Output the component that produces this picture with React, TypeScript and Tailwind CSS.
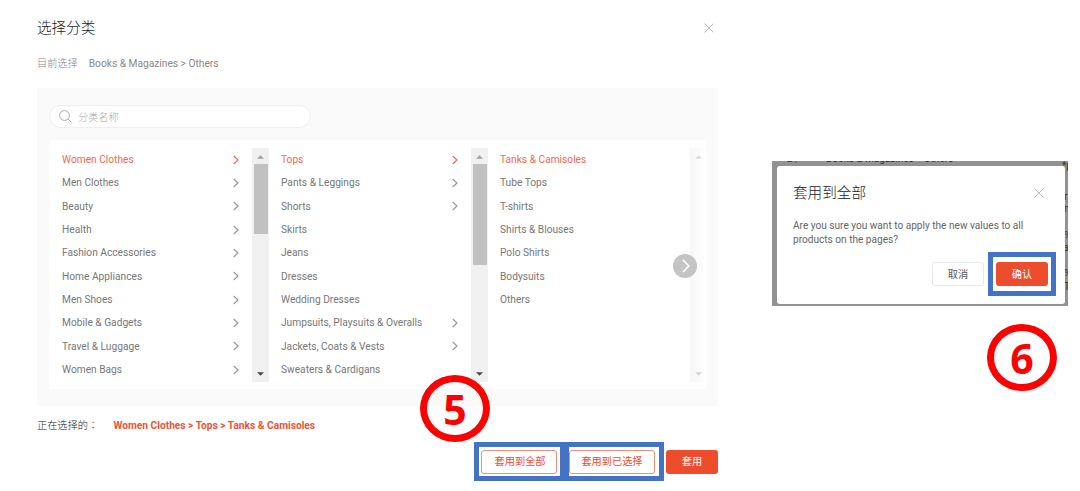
import type { ReactNode } from 'react';

interface ICategory {
  name: string;
  hasChild?: boolean;
}

const mainCategories: ICategory[] = [
  { name: 'Women Clothes', hasChild: true },
  { name: 'Men Clothes', hasChild: true },
  { name: 'Beauty', hasChild: true },
  { name: 'Health', hasChild: true },
  { name: 'Fashion Accessories', hasChild: true },
  { name: 'Home Appliances', hasChild: true },
  { name: 'Men Shoes', hasChild: true },
  { name: 'Mobile & Gadgets', hasChild: true },
  { name: 'Travel & Luggage', hasChild: true },
  { name: 'Women Bags', hasChild: true },
];

const subCategories: ICategory[] = [
  { name: 'Tops', hasChild: true },
  { name: 'Pants & Leggings', hasChild: true },
  { name: 'Shorts', hasChild: true },
  { name: 'Skirts' },
  { name: 'Jeans' },
  { name: 'Dresses' },
  { name: 'Wedding Dresses' },
  { name: 'Jumpsuits, Playsuits & Overalls', hasChild: true },
  { name: 'Jackets, Coats & Vests', hasChild: true },
  { name: 'Sweaters & Cardigans' },
];

const leafCategories: ICategory[] = [
  { name: 'Tanks & Camisoles' },
  { name: 'Tube Tops' },
  { name: 'T-shirts' },
  { name: 'Shirts & Blouses' },
  { name: 'Polo Shirts' },
  { name: 'Bodysuits' },
  { name: 'Others' },
];

const CloseIcon = ({ className }: { className: string }) => (
  <svg viewBox="0 0 10 10" fill="none" stroke="currentColor" className={className}>
    <path d="M0.5 0.5l9 9M9.5 0.5l-9 9" />
  </svg>
);

const Chevron = () => (
  <svg
    viewBox="0 0 6 10"
    fill="none"
    stroke="currentColor"
    strokeWidth="1.2"
    className="h-2.5 w-1.5"
  >
    <path d="M0.7 1l4.3 4-4.3 4" />
  </svg>
);

const Scrollbar = ({
  thumb,
  faded = false,
}: {
  thumb?: string;
  faded?: boolean;
}) => (
  <div
    className={`flex h-[234px] w-[17px] shrink-0 flex-col items-center justify-between ${
      faded ? 'bg-linear-to-r from-[#f6f6f6] to-white' : 'bg-[#f0f0f0]'
    }`}
  >
    <div className="flex w-full flex-col items-center">
      <svg
        viewBox="0 0 8 4"
        className={`mt-[7px] mb-[5px] h-1 w-[7px] ${faded ? 'text-[#dddddd]' : 'text-[#a0a0a0]'}`}
      >
        <path d="M0 4l4-4 4 4z" fill="currentColor" />
      </svg>
      {thumb && <div className={`w-3.5 bg-[#c1c1c1] ${thumb}`} />}
    </div>
    <svg
      viewBox="0 0 8 4"
      className={`mb-[6px] h-1 w-[7px] ${faded ? 'text-[#d5d5d5]' : 'text-[#484848]'}`}
    >
      <path d="M0 0h8l-4 4z" fill="currentColor" />
    </svg>
  </div>
);

const CategoryColumn = ({
  items,
  children,
}: {
  items: ICategory[];
  children: ReactNode;
}) => (
  <div className="flex w-[219px] shrink-0">
    <ul className="flex-1 pr-[13px] pl-3">
      {items.map((item, index) => (
        <li
          key={item.name}
          className={`flex h-[23.35px] items-center justify-between whitespace-nowrap ${
            index === 0 ? 'text-[#f4694c]' : 'text-[#777777]'
          }`}
        >
          <span>{item.name}</span>
          {item.hasChild && (
            <span className={index === 0 ? '' : 'text-[#999999]'}>
              <Chevron />
            </span>
          )}
        </li>
      ))}
    </ul>
    {children}
  </div>
);

const StepBadge = ({
  step,
  className,
}: {
  step: number;
  className: string;
}) => (
  <div
    className={`absolute flex h-[67px] w-[70px] items-center justify-center rounded-[50%] border-[7px] border-[#ff0000] pt-0.5 font-['Open_Sans'] text-[41px] leading-none font-bold text-[#ff0000] ${className}`}
  >
    <span>{step}</span>
  </div>
);

const CategoryPicker = () => (
  <section className="w-[681px] pt-[17px]">
    <div className="flex h-[22px] items-center justify-between">
      <h1 className="pt-0.5 text-[14.6px] font-light text-[#222222]">选择分类</h1>
      <CloseIcon className="mr-1 size-2.5 text-[#b8b8b8]" />
    </div>
    <div className="mt-[14px] flex h-5 items-center gap-[10px] pt-px text-[#888888]">
      <span className="font-light">目前选择</span>
      <span className="pl-px">Books &amp; Magazines &gt; Others</span>
    </div>

    <div className="mt-[15px] h-[318px] bg-[#fafafa] px-3 pt-[17px]">
      <div className="flex h-[23px] w-[262px] items-center gap-[6px] rounded-full border border-[#eeeeee] bg-white pl-[9px] text-[#aaaaaa]">
        <svg
          viewBox="0 0 13 13"
          fill="none"
          stroke="currentColor"
          className="size-[13px]"
        >
          <circle cx="5.5" cy="5.5" r="4.9" />
          <path d="M9.1 9.1l3.4 3.4" />
        </svg>
        <span className="pt-0.5 font-light">分类名称</span>
      </div>
      <div className="relative mt-3 flex h-[249px] overflow-hidden bg-white pt-2 pl-px">
        <CategoryColumn items={mainCategories}>
          <Scrollbar thumb="h-[70px]" />
        </CategoryColumn>
        <CategoryColumn items={subCategories}>
          <Scrollbar thumb="h-[101px]" />
        </CategoryColumn>
        <CategoryColumn items={leafCategories}>
          <Scrollbar faded />
        </CategoryColumn>
        <div className="absolute top-[114px] right-[9px] flex size-6 items-center justify-center rounded-full bg-[#c4c4c4]">
          <svg
            viewBox="0 0 8 14"
            fill="none"
            stroke="white"
            strokeWidth="1.6"
            className="ml-0.5 h-3.5 w-2"
          >
            <path d="M0.8 0.8l6 6.2-6 6.2" />
          </svg>
        </div>
      </div>
    </div>

    <div className="mt-[9px] flex h-5 items-center pt-px">
      <span className="w-[76.5px] font-light text-[#222222]">
        正在选择的<span className="font-['Noto_Sans_CJK_TC']" lang="zh-TW">：</span>
      </span>
      <span className="font-bold text-[#f05335]">
        Women Clothes &gt; Tops &gt; Tanks &amp; Camisoles
      </span>
    </div>
    <div className="mt-[7px] flex items-center justify-end">
      <div className="flex h-[39px] w-[91px] items-center border-5 border-[#4472c4] pl-0.5">
        <button className="h-6 w-[76px] rounded-[3px] border border-[#f28b76] pt-px pl-0.5 text-[#ee4d2d]">
          套用到全部
        </button>
      </div>
      <div className="-ml-px flex h-[39px] w-[100px] items-center border-5 border-[#4472c4]">
        <button className="h-6 w-[86px] rounded-[3px] border border-[#f28b76] pt-px text-[#ee4d2d]">
          套用到已选择
        </button>
      </div>
      <button className="ml-0.5 h-6 w-[52px] rounded-[3px] bg-[#ee4d2d] pt-px text-white">
        套用
      </button>
    </div>
  </section>
);

const ConfirmDialog = () => (
  <section className="relative mt-[161px] ml-[54px] h-[145px] w-[296px] overflow-hidden bg-[#929292] pt-[5px] pl-[5px] text-[10px] leading-none text-[#333333]">
    {/* page behind the dialog, only its edges show */}
    <span className="absolute -top-[7px] left-[15px]">2 /</span>
    <span className="absolute -top-[7px] left-[54px] whitespace-nowrap">
      Books &amp; Magazines &gt; Others
    </span>
    <span className="absolute top-0 left-[290px]">*p</span>
    <span className="absolute top-[31px] left-[292px]">r</span>
    <span className="absolute top-[43px] left-[292px]">m</span>
    <span className="absolute top-[70px] left-[292px]">%</span>
    <span className="absolute top-[82px] left-[291px]">a</span>
    <span className="absolute top-[108px] left-[292px]">%</span>
    <span className="absolute top-[121px] left-[292px]">T</span>

    <div className="relative h-[138px] w-[288px] rounded-[3px] bg-white px-4 pt-[16px]">
      <div className="flex h-[22px] items-center justify-between">
        <h2 className="text-[14.6px] font-light text-[#222222]">套用到全部</h2>
        <CloseIcon className="mr-[5px] size-2.5 text-[#bbbbbb]" />
      </div>
      <p className="mt-[15px] w-[240px] text-[10.1px] leading-[13.5px] text-[#666666]">
        Are you sure you want to apply the new values to all products on the
        pages?
      </p>
      <div className="mt-[6px] flex items-center justify-end">
        <button className="mr-1 h-6 w-[52px] rounded-[3px] border border-[#e8e8e8] pt-0.5 text-[10.2px] text-[#555555]">
          取消
        </button>
        <div className="-mr-[7px] flex h-11 w-[68px] items-center justify-center border-5 border-[#4472c4]">
          <button className="h-6 w-[52px] rounded-[3px] bg-[#ee4d2d] pt-0.5 text-[10.2px] text-white">
            确认
          </button>
        </div>
      </div>
    </div>
  </section>
);

const App = () => {
  return (
    <main className="relative flex h-[491px] w-[1080px] items-start overflow-hidden bg-white pl-[37px] font-['Roboto','Noto_Sans_CJK_SC',sans-serif] text-[10.2px]">
      <CategoryPicker />
      <ConfirmDialog />
      <StepBadge step={5} className="top-[375px] left-[420px]" />
      <StepBadge step={6} className="top-[324px] left-[987px]" />
    </main>
  );
};

export default App;
